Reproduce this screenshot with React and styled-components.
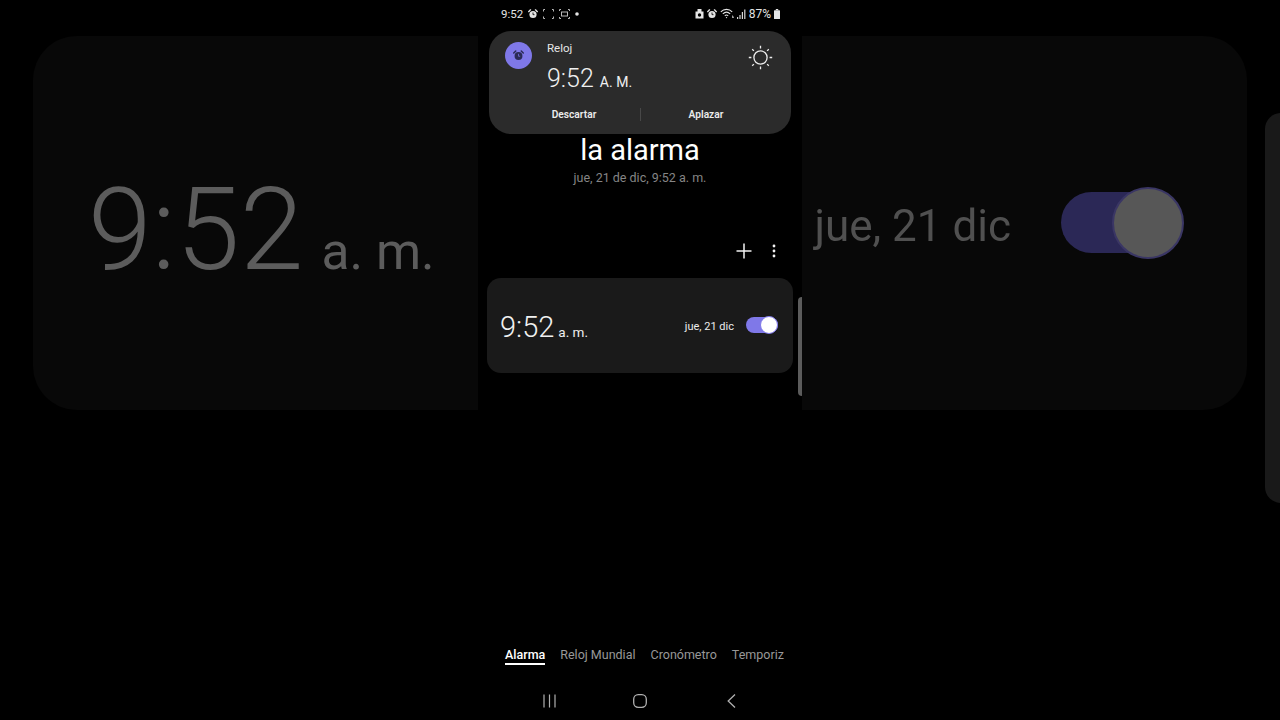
import React from 'react'
import styled, {createGlobalStyle} from "styled-components";

const Global=createGlobalStyle`
  html,body{
    margin:0;
    padding:0;
    background:#000;
    overflow:hidden;
  }
  *{
    box-sizing:border-box;
  }
`;

const Screen=styled.div`
  position:relative;
  width:1280px;
  height:720px;
  background:#000;
  font-family:Roboto, "Liberation Sans", sans-serif;
  overflow:hidden;
`;

/* blurred, zoomed copy of the alarm row behind the phone */
const Backdrop=styled.div`
  display:flex;
  align-items:flex-start;
  padding:36px 0 0 33px;
  gap:18px;
`;

const BigCard=styled.div`
  flex:none;
  width:1214px;
  height:374px;
  background:#080808;
  border-radius:44px;
  display:flex;
  align-items:center;
  justify-content:space-between;
  padding:0 68px 0 55px;
  filter:blur(0.6px);
`;

const BigTime=styled.div`
  display:flex;
  align-items:baseline;
  gap:18px;
  color:#5c5c5c;
  margin-top:12px;
`;

const BigDigits=styled.span`
  font-size:115px;
  font-weight:300;
  line-height:1;
`;

const BigSuffix=styled.span`
  font-size:51.5px;
  font-weight:400;
  line-height:1;
`;

const BigRight=styled.div`
  display:flex;
  align-items:center;
  gap:50px;
  margin-top:-2px;
`;

const BigDate=styled.span`
  font-size:44px;
  color:#505050;
  line-height:1;
  margin-top:8px;
`;

const SideCard=styled.div`
  flex:none;
  width:60px;
  height:390px;
  margin-top:77px;
  background:#191919;
  border-radius:16px;
`;

const Phone=styled.div`
  position:absolute;
  top:0;
  left:478px;
  width:324px;
  height:720px;
  background:#000;
  display:flex;
  flex-direction:column;
`;

const StatusBar=styled.div`
  height:27px;
  padding:0 22px 0 23px;
  display:flex;
  align-items:center;
  justify-content:space-between;
  color:#e4e4e4;
  font-size:11.5px;
`;

const StatusGroup=styled.div`
  display:flex;
  align-items:center;
  gap:${p=>p.$gap||4}px;
`;

const BatteryText=styled.span`
  font-size:12px;
`;

const Notification=styled.div`
  margin:4px 11px 0;
  height:103px;
  background:#2b2b2b;
  border-radius:22px;
  display:flex;
  flex-direction:column;
`;

const NotifTop=styled.div`
  display:flex;
  height:75px;
  padding:11px 18px 0 16px;
`;

const AppBadge=styled.div`
  width:27px;
  height:27px;
  border-radius:50%;
  background:#7f78e8;
  display:flex;
  align-items:center;
  justify-content:center;
  flex:none;
`;

const NotifBody=styled.div`
  flex:1;
  padding-left:15px;
`;

const SunSlot=styled.div`
  padding-top:3px;
`;

const AppName=styled.div`
  font-size:11.5px;
  line-height:13px;
  color:#e6e6e6;
`;

const TimeLine=styled.div`
  display:flex;
  align-items:baseline;
  color:#f0f0f0;
  gap:${p=>p.$gap}px;
  margin-top:${p=>p.$top||0}px;
`;

const Digits=styled.span`
  font-size:${p=>p.$size}px;
  font-weight:300;
  line-height:1;
`;

const Suffix=styled.span`
  font-size:${p=>p.$size}px;
  line-height:1;
`;

const NotifActions=styled.div`
  display:grid;
  grid-template-columns:151px 1px 150px;
  align-items:center;
  height:14px;
  margin-top:1px;
`;

const Action=styled.div`
  font-size:10.2px;
  font-weight:600;
  color:#ececec;
  text-align:center;
  padding:${p=>p.$side==="left"?"0 0 0 19px":"0 20px 0 0"};
`;

const ActionDivider=styled.div`
  height:13px;
  background:#484848;
`;

const Title=styled.div`
  height:32px;
  font-size:29px;
  line-height:32px;
  color:#fff;
  text-align:center;
`;

const Subtitle=styled.div`
  margin-top:3px;
  font-size:12.5px;
  line-height:18px;
  color:#858585;
  text-align:center;
`;

const Toolbar=styled.div`
  margin-top:52px;
  height:24px;
  padding-right:26px;
  display:flex;
  justify-content:flex-end;
  align-items:center;
  gap:20px;
`;

const AlarmRow=styled.div`
  margin:15px 9px 0;
  height:95px;
  background:#1a1a1a;
  border-radius:14px;
  display:flex;
  align-items:center;
  justify-content:space-between;
  padding:0 15px 0 13px;
`;

const RowTime=styled.div`
  margin-top:3px;
`;

const AlarmRight=styled.div`
  display:flex;
  align-items:center;
  gap:12px;
  margin-top:-1px;
`;

const AlarmDate=styled.span`
  font-size:11px;
  color:#ececec;
  margin-top:2px;
`;

const Toggle=styled.div`
  position:relative;
  width:32px;
  height:16px;
  background:#7f78e8;
  border-radius:8px;
`;

const Thumb=styled.div`
  position:absolute;
  top:-1px;
  right:0;
  width:18px;
  height:18px;
  border-radius:50%;
  background:#fff;
  border:1px solid #7f78e8;
`;

const BigToggle=styled.div`
  position:relative;
  width:118px;
  height:61px;
  background:#2b2856;
  border-radius:31px;
`;

const BigThumb=styled.div`
  position:absolute;
  top:-5px;
  right:-5px;
  width:72px;
  height:72px;
  border-radius:50%;
  background:#575757;
  border:2px solid #3a3664;
`;

const Scrollbar=styled.div`
  position:absolute;
  top:297px;
  right:0;
  width:4px;
  height:99px;
  background:#5c5c5c;
  border-radius:4px 0 0 4px;
`;

const Tabs=styled.div`
  margin-top:auto;
  display:flex;
  align-items:flex-start;
  padding-left:27px;
  gap:15px;
  height:33px;
`;

const Tab=styled.div`
  font-size:12.5px;
  line-height:16px;
  white-space:nowrap;
  color:${p=>p.$active?"#fff":"#989898"};
  font-weight:${p=>p.$active?500:400};
  border-bottom:${p=>p.$active?"2px solid #fff":"none"};
`;

const NavBar=styled.div`
  height:40px;
  padding-top:14px;
  display:grid;
  grid-template-columns:repeat(3, 91px);
  justify-content:center;
  justify-items:center;
`;

const AlarmIcon=({color="#2b2b55", size=11})=>(
  <svg width={size} height={size} viewBox="0 0 12 12">
    <circle cx="6" cy="6.6" r="4.3" fill={color}/>
    <path d="M0.8 3.2 L3 1 M11.2 3.2 L9 1" stroke={color} strokeWidth="1.6" strokeLinecap="round"/>
    <path d="M6 4.2V6.8H7.8" stroke="#7f78e8" strokeWidth="0.8" fill="none"/>
  </svg>
);

const StatusAlarm=()=>(
  <svg width="10" height="10" viewBox="0 0 12 12">
    <circle cx="6" cy="6.6" r="4.3" fill="#e4e4e4"/>
    <path d="M0.8 3.2 L3 1 M11.2 3.2 L9 1" stroke="#e4e4e4" strokeWidth="1.6" strokeLinecap="round"/>
    <path d="M6 4.2V6.8H7.8" stroke="#000" strokeWidth="1" fill="none"/>
  </svg>
);

const DashedFrame=()=>(
  <svg width="11" height="10" viewBox="0 0 11 10" stroke="#b8b8b8" strokeWidth="1" fill="none">
    <path d="M0.5 2.5V0.5H2M9 0.5H10.5V2.5M0.5 7.5V9.5H2M9 9.5H10.5V7.5"/>
  </svg>
);

const CaptureFrame=()=>(
  <svg width="11" height="10" viewBox="0 0 11 10" stroke="#b8b8b8" strokeWidth="1" fill="none">
    <path d="M0.5 2V0.5H2M9 0.5H10.5V2M0.5 8V9.5H2M9 9.5H10.5V8"/>
    <rect x="2.5" y="3" width="6" height="4"/>
  </svg>
);

const Dot=()=>(
  <svg width="4" height="4" viewBox="0 0 4 4"><circle cx="2" cy="2" r="1.8" fill="#e4e4e4"/></svg>
);

const LockBadge=()=>(
  <svg width="9" height="11" viewBox="0 0 9 11">
    <path d="M0.5 3.5 L2.5 3.5 L2.5 1 L6.5 1 L6.5 3.5 L8.5 3.5 L8.5 10.5 L0.5 10.5Z" fill="#e4e4e4"/>
    <circle cx="4.5" cy="7" r="1.7" fill="#000"/>
  </svg>
);

const Wifi=()=>(
  <svg width="14" height="11" viewBox="0 0 14 11" fill="none" stroke="#e4e4e4" strokeWidth="1.1">
    <path d="M0.8 3.8C4 0.6 9 0.6 12.2 3.8"/>
    <path d="M2.8 5.8C5 3.8 8 3.8 10.2 5.8"/>
    <path d="M4.8 7.8C5.8 6.9 7.2 6.9 8.2 7.8"/>
    <circle cx="6.5" cy="9.6" r="0.7" fill="#e4e4e4" stroke="none"/>
    <path d="M12.5 7.5V10M13.6 8.5V10" strokeWidth="0.7"/>
  </svg>
);

const Signal=()=>(
  <svg width="9" height="10" viewBox="0 0 9 10" fill="#d8d8d8">
    <rect x="0" y="8" width="1.2" height="2"/>
    <rect x="2.4" y="6" width="1.2" height="4"/>
    <rect x="4.8" y="3" width="1.2" height="7"/>
    <rect x="7.2" y="0.5" width="1.2" height="9.5"/>
  </svg>
);

const Battery=()=>(
  <svg width="6" height="10" viewBox="0 0 6 10" fill="#e4e4e4">
    <rect x="1.8" y="0" width="2.4" height="1.2"/>
    <rect x="0" y="1.2" width="6" height="8.8" rx="0.6"/>
  </svg>
);

const Sun=()=>(
  <svg width="25" height="25" viewBox="0 0 25 25" fill="none" stroke="#ededed" strokeWidth="1.3">
    <circle cx="12.5" cy="12.5" r="6.6"/>
    <path d="M12.5 0.8V3.4M12.5 21.6V24.2M0.8 12.5H3.4M21.6 12.5H24.2M4.2 4.2L5.9 5.9M19.1 19.1L20.8 20.8M20.8 4.2L19.1 5.9M5.9 19.1L4.2 20.8"/>
  </svg>
);

const PlusIcon=()=>(
  <svg width="16" height="16" viewBox="0 0 16 16" stroke="#f2f2f2" strokeWidth="1.5">
    <path d="M8 0.5V15.5M0.5 8H15.5"/>
  </svg>
);

const MoreIcon=()=>(
  <svg width="4" height="14" viewBox="0 0 4 14" fill="#f2f2f2">
    <circle cx="2" cy="2" r="1.4"/>
    <circle cx="2" cy="7" r="1.4"/>
    <circle cx="2" cy="12" r="1.4"/>
  </svg>
);

const RecentsIcon=()=>(
  <svg width="13" height="14" viewBox="0 0 13 14" stroke="#b0b0b0" strokeWidth="1.2">
    <path d="M1 0.5V13.5M6.5 0.5V13.5M12 0.5V13.5"/>
  </svg>
);

const HomeIcon=()=>(
  <svg width="14" height="14" viewBox="0 0 14 14" fill="none" stroke="#b0b0b0" strokeWidth="1.3">
    <rect x="0.7" y="0.7" width="12.6" height="12.6" rx="4.5"/>
  </svg>
);

const BackIcon=()=>(
  <svg width="9" height="14" viewBox="0 0 9 14" fill="none" stroke="#b0b0b0" strokeWidth="1.3">
    <path d="M8 0.5L1.2 7L8 13.5"/>
  </svg>
);

const tabs=["Alarma", "Reloj Mundial", "Cronómetro", "Temporiz"];

const App = () => {
  return (
    <Screen>
      <Global/>
      <Backdrop>
        <BigCard>
          <BigTime>
            <BigDigits>9:52</BigDigits>
            <BigSuffix>a. m.</BigSuffix>
          </BigTime>
          <BigRight>
            <BigDate>jue, 21 dic</BigDate>
            <BigToggle><BigThumb/></BigToggle>
          </BigRight>
        </BigCard>
        <SideCard/>
      </Backdrop>
      <Phone>
        <StatusBar>
          <StatusGroup $gap={5}>
            <span>9:52</span>
            <StatusAlarm/>
            <DashedFrame/>
            <CaptureFrame/>
            <Dot/>
          </StatusGroup>
          <StatusGroup $gap={3}>
            <LockBadge/>
            <StatusAlarm/>
            <Wifi/>
            <Signal/>
            <BatteryText>87%</BatteryText>
            <Battery/>
          </StatusGroup>
        </StatusBar>
        <Notification>
          <NotifTop>
            <AppBadge><AlarmIcon/></AppBadge>
            <NotifBody>
              <AppName>Reloj</AppName>
              <TimeLine $gap={6} $top={11}>
                <Digits $size={25}>9:52</Digits>
                <Suffix $size={14}>A. M.</Suffix>
              </TimeLine>
            </NotifBody>
            <SunSlot><Sun/></SunSlot>
          </NotifTop>
          <NotifActions>
            <Action $side="left">Descartar</Action>
            <ActionDivider/>
            <Action>Aplazar</Action>
          </NotifActions>
        </Notification>
        <Title>la alarma</Title>
        <Subtitle>jue, 21 de dic, 9:52 a. m.</Subtitle>
        <Toolbar>
          <PlusIcon/>
          <MoreIcon/>
        </Toolbar>
        <AlarmRow>
          <RowTime>
            <TimeLine $gap={4}>
              <Digits $size={29}>9:52</Digits>
              <Suffix $size={13.5}>a. m.</Suffix>
            </TimeLine>
          </RowTime>
          <AlarmRight>
            <AlarmDate>jue, 21 dic</AlarmDate>
            <Toggle><Thumb/></Toggle>
          </AlarmRight>
        </AlarmRow>
        <Scrollbar/>
        <Tabs>
          {tabs.map((tab, index)=>(
            <Tab key={tab} $active={index===0}>{tab}</Tab>
          ))}
        </Tabs>
        <NavBar>
          <RecentsIcon/>
          <HomeIcon/>
          <BackIcon/>
        </NavBar>
      </Phone>
    </Screen>
  )
}

export default App
